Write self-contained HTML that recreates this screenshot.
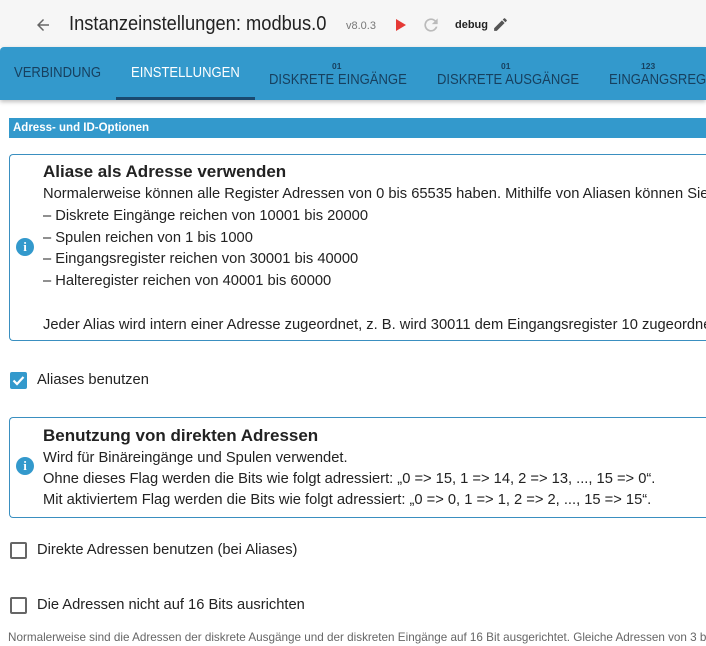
<!DOCTYPE html><html><head><meta charset="utf-8"><style>
body{margin:0;width:706px;height:646px;overflow:hidden;background:#fff;font-family:"Liberation Sans",sans-serif;position:relative;color:#222}
.a{position:absolute;white-space:nowrap}
.hdr{left:0;top:0;width:706px;height:47px;background:#f6f6f6}
.tabs{left:0;top:47px;width:706px;height:53px;background:#3399cc;border-radius:4px 0 0 0;box-shadow:0 2px 4px rgba(0,0,0,.25)}
.tab{font-size:14.5px;color:#17405f;transform:scaleX(.9);transform-origin:left}
.sup{font-size:8.5px;color:#17405f;font-weight:bold}
.box{border:1px solid #3a8fc0;border-radius:4px;border-right:none}
.t{font-size:14.7px;color:#222}
.h{font-size:17px;font-weight:bold;color:#222}
.info{width:18px;height:18px;border-radius:50%;background:#3399cc;color:#fff;font-size:13px;font-weight:bold;text-align:center;line-height:18px;font-family:"Liberation Serif",serif}
.cb{width:13px;height:13px;border:2px solid #666;border-radius:2px}
</style></head><body>
<div class="a hdr"></div>
<svg class="a" style="left:34px;top:16px" width="18" height="18" viewBox="0 0 24 24"><path d="M20 11H7.83l5.59-5.59L12 4l-8 8 8 8 1.41-1.41L7.83 13H20v-2z" fill="#666"/></svg>
<div class="a" style="left:69px;top:13px;font-size:20px;color:#222;transform:scaleX(.915);transform-origin:left">Instanzeinstellungen: modbus.0</div>
<div class="a" style="left:346px;top:20px;font-size:11px;color:#777">v8.0.3</div>
<svg class="a" style="left:395px;top:18px" width="12" height="14"><path d="M1 1L11 7L1 13Z" fill="#e53935"/></svg>
<svg class="a" style="left:421px;top:15px" width="20" height="20" viewBox="0 0 24 24"><path d="M17.65 6.35A7.96 7.96 0 0 0 12 4a8 8 0 1 0 7.730 10h-2.08A6 6 0 1 1 12 6c1.66 0 3.14.69 4.22 1.78L13 11h7V4l-2.35 2.35z" fill="#bbb"/></svg>
<div class="a" style="left:455px;top:19px;font-size:11px;font-weight:bold;color:#222">debug</div>
<svg class="a" style="left:492px;top:16px" width="17" height="17" viewBox="0 0 24 24"><path d="M3 17.25V21h3.75L17.81 9.94l-3.75-3.75L3 17.25zM20.71 7.04a1 1 0 0 0 0-1.41l-2.34-2.34a1 1 0 0 0-1.41 0l-1.83 1.83 3.75 3.75 1.83-1.83z" fill="#555"/></svg>
<div class="a tabs"></div>
<div class="a tab" style="left:14px;top:65px">VERBINDUNG</div>
<div class="a tab" style="left:131px;top:65px;color:#fff">EINSTELLUNGEN</div>
<div class="a" style="left:116px;top:97px;width:139px;height:3px;background:#1a4a70"></div>
<div class="a sup" style="left:332px;top:61px">01</div>
<div class="a tab" style="left:269px;top:72px">DISKRETE EINGÄNGE</div>
<div class="a sup" style="left:501px;top:61px">01</div>
<div class="a tab" style="left:437px;top:72px">DISKRETE AUSGÄNGE</div>
<div class="a sup" style="left:641px;top:61px">123</div>
<div class="a tab" style="left:609px;top:72px">EINGANGSREG</div>
<div class="a" style="left:9px;top:118px;width:697px;height:20px;background:#3399cc"></div>
<div class="a" style="left:13px;top:122px;font-size:11.5px;font-weight:bold;color:#fff">Adress- und ID-Optionen</div>
<div class="a box" style="left:9px;top:154px;width:700px;height:185px"></div>
<div class="a h" style="left:43px;top:162px">Aliase als Adresse verwenden</div>
<div class="a t" style="left:43px;top:186px">Normalerweise können alle Register Adressen von 0 bis 65535 haben. Mithilfe von Aliasen können Sie</div>
<div class="a t" style="left:43px;top:208px">– Diskrete Eingänge reichen von 10001 bis 20000</div>
<div class="a t" style="left:43px;top:230px">– Spulen reichen von 1 bis 1000</div>
<div class="a t" style="left:43px;top:251px">– Eingangsregister reichen von 30001 bis 40000</div>
<div class="a t" style="left:43px;top:273px">– Halteregister reichen von 40001 bis 60000</div>
<div class="a t" style="left:43px;top:317px">Jeder Alias wird intern einer Adresse zugeordnet, z. B. wird 30011 dem Eingangsregister 10 zugeordnet</div>
<div class="a info" style="left:16px;top:238px">i</div>
<div class="a" style="left:10px;top:372px;width:17px;height:17px;background:#3399cc;border-radius:2px"></div>
<svg class="a" style="left:10px;top:372px" width="17" height="17"><path d="M3.5 8.5L7 12L13.5 5" stroke="#fff" stroke-width="2.2" fill="none"/></svg>
<div class="a t" style="left:37px;top:372px">Aliases benutzen</div>
<div class="a box" style="left:9px;top:417px;width:700px;height:99px"></div>
<div class="a h" style="left:43px;top:426px">Benutzung von direkten Adressen</div>
<div class="a t" style="left:43px;top:450px">Wird für Binäreingänge und Spulen verwendet.</div>
<div class="a t" style="left:43px;top:471px">Ohne dieses Flag werden die Bits wie folgt adressiert: „0 =&gt; 15, 1 =&gt; 14, 2 =&gt; 13, ..., 15 =&gt; 0“.</div>
<div class="a t" style="left:43px;top:492px">Mit aktiviertem Flag werden die Bits wie folgt adressiert: „0 =&gt; 0, 1 =&gt; 1, 2 =&gt; 2, ..., 15 =&gt; 15“.</div>
<div class="a info" style="left:16px;top:457px">i</div>
<div class="a cb" style="left:10px;top:542px"></div>
<div class="a t" style="left:37px;top:542px">Direkte Adressen benutzen (bei Aliases)</div>
<div class="a cb" style="left:10px;top:597px"></div>
<div class="a t" style="left:37px;top:597px">Die Adressen nicht auf 16 Bits ausrichten</div>
<div class="a" style="left:8px;top:631px;font-size:11.7px;color:#666">Normalerweise sind die Adressen der diskrete Ausgänge und der diskreten Eingänge auf 16 Bit ausgerichtet. Gleiche Adressen von 3 bis</div>
</body></html>
